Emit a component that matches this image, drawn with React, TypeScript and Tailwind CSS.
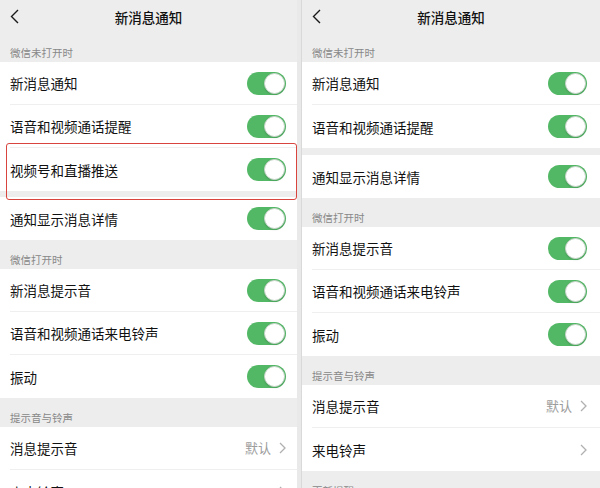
import React from 'react';

type Item =
  | { kind: 'header' }
  | { kind: 'section'; label: string }
  | { kind: 'gap'; h: 'sm' | 'md' }
  | { kind: 'toggle'; label: string; divider?: boolean }
  | { kind: 'link'; label: string; value?: string; divider?: boolean };

const Toggle: React.FC = () => (
  <div className="flex h-[23px] w-[39px] items-center justify-end rounded-full bg-[#53b866] p-[1px]">
    <div className="h-[21px] w-[21px] rounded-full border border-[#c9d6cb] bg-white shadow-[0_1px_2px_rgba(0,0,0,0.15)]" />
  </div>
);

const Chevron: React.FC = () => (
  <svg width="7" height="12" viewBox="0 0 7 12" className="ml-[8px]">
    <polyline points="1,1 6,6 1,11" fill="none" stroke="#b0b0b0" strokeWidth="1.3" />
  </svg>
);

const BackArrow: React.FC = () => (
  <svg width="9" height="15" viewBox="0 0 9 15">
    <polyline points="8,1 1.5,7.5 8,14" fill="none" stroke="#1a1a1a" strokeWidth="1.4" />
  </svg>
);

const Panel: React.FC<{ items: Item[]; width: string; padRight: string }> = ({ items, width, padRight }) => (
  <div className={`relative h-[488px] shrink-0 overflow-hidden bg-[#ededed] ${width}`}>
    {items.map((it, i) => {
      if (it.kind === 'header') {
        return (
          <div key={i} className="relative flex h-[33px] items-center justify-center">
            <div className="absolute left-[10px] top-[9px]">
              <BackArrow />
            </div>
            <span className="text-[13.5px] font-medium leading-[18px] text-[#111]">新消息通知</span>
          </div>
        );
      }
      if (it.kind === 'section') {
        return (
          <div key={i} className="flex h-[29px] items-end pb-[2px] pl-[10px]">
            <span className="text-[10.5px] leading-[14px] text-[#888]">{it.label}</span>
          </div>
        );
      }
      if (it.kind === 'gap') {
        return <div key={i} className={it.h === 'sm' ? 'h-[6px]' : 'h-[7px]'} />;
      }
      return (
        <div key={i} className="bg-white pl-[10px]">
          <div
            className={`flex h-[43px] items-center justify-between ${padRight} ${
              it.divider ? 'border-b border-[#efefef]' : ''
            }`}
          >
            <span className="text-[13.5px] leading-[18px] text-[#111]">{it.label}</span>
            {it.kind === 'toggle' ? (
              <Toggle />
            ) : (
              <div className="flex items-center">
                {it.value && <span className="text-[13px] text-[#9c9c9c]">{it.value}</span>}
                <Chevron />
              </div>
            )}
          </div>
        </div>
      );
    })}
  </div>
);

const leftItems: Item[] = [
  { kind: 'header' },
  { kind: 'section', label: '微信未打开时' },
  { kind: 'toggle', label: '新消息通知', divider: true },
  { kind: 'toggle', label: '语音和视频通话提醒', divider: true },
  { kind: 'toggle', label: '视频号和直播推送' },
  { kind: 'gap', h: 'sm' },
  { kind: 'toggle', label: '通知显示消息详情' },
  { kind: 'section', label: '微信打开时' },
  { kind: 'toggle', label: '新消息提示音', divider: true },
  { kind: 'toggle', label: '语音和视频通话来电铃声', divider: true },
  { kind: 'toggle', label: '振动' },
  { kind: 'section', label: '提示音与铃声' },
  { kind: 'link', label: '消息提示音', value: '默认', divider: true },
  { kind: 'link', label: '来电铃声' },
];

const rightItems: Item[] = [
  { kind: 'header' },
  { kind: 'section', label: '微信未打开时' },
  { kind: 'toggle', label: '新消息通知', divider: true },
  { kind: 'toggle', label: '语音和视频通话提醒' },
  { kind: 'gap', h: 'md' },
  { kind: 'toggle', label: '通知显示消息详情' },
  { kind: 'section', label: '微信打开时' },
  { kind: 'toggle', label: '新消息提示音', divider: true },
  { kind: 'toggle', label: '语音和视频通话来电铃声', divider: true },
  { kind: 'toggle', label: '振动' },
  { kind: 'section', label: '提示音与铃声' },
  { kind: 'link', label: '消息提示音', value: '默认', divider: true },
  { kind: 'link', label: '来电铃声' },
  { kind: 'section', label: '更新提醒' },
];

export default function App() {
  return (
    <div
      className="relative flex h-[488px] w-[600px] overflow-hidden bg-[#e6e6e6]"
      style={{ fontFamily: '"Noto Sans CJK SC", "Noto Sans", sans-serif' }}
    >
      <Panel items={leftItems} width="w-[297px]" padRight="pr-[11px]" />
      <div className="w-[5px] shrink-0 border-r border-[#d9d9d9] bg-[#e9e9e9]" />
      <Panel items={rightItems} width="w-[298px]" padRight="pr-[13px]" />
      <div className="pointer-events-none absolute left-[6px] top-[143px] h-[57px] w-[291px] rounded-[3px] border-[1.5px] border-[#d8453e]" />
    </div>
  );
}
